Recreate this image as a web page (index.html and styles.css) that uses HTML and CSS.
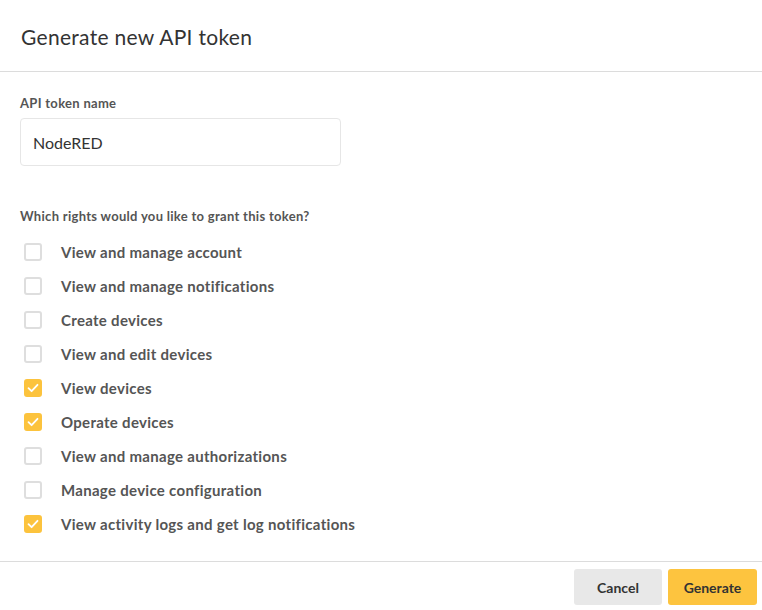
FILE: index.html
```html
<!DOCTYPE html>
<html>
<head>
<meta charset="utf-8">
<link rel="stylesheet" href="styles.css">
</head>
<body>
<div class="modal">
  <header class="modal-header">
    <h1 class="title">Generate new API token</h1>
  </header>
  <section class="modal-body">
    <label class="field-label">API token name</label>
    <div class="input">NodeRED</div>
    <p class="question">Which rights would you like to grant this token?</p>
    <ul class="rights">
      <li class="right"><span class="box"></span><span class="rlabel">View and manage account</span></li>
      <li class="right"><span class="box"></span><span class="rlabel">View and manage notifications</span></li>
      <li class="right"><span class="box"></span><span class="rlabel">Create devices</span></li>
      <li class="right"><span class="box"></span><span class="rlabel">View and edit devices</span></li>
      <li class="right"><span class="box checked"><svg viewBox="0 0 18 18" width="18" height="18"><path d="M4.5 9.2 L7.6 12.2 L13.5 5.8" fill="none" stroke="#fff" stroke-width="1.8" stroke-linecap="round" stroke-linejoin="round"/></svg></span><span class="rlabel">View devices</span></li>
      <li class="right"><span class="box checked"><svg viewBox="0 0 18 18" width="18" height="18"><path d="M4.5 9.2 L7.6 12.2 L13.5 5.8" fill="none" stroke="#fff" stroke-width="1.8" stroke-linecap="round" stroke-linejoin="round"/></svg></span><span class="rlabel">Operate devices</span></li>
      <li class="right"><span class="box"></span><span class="rlabel">View and manage authorizations</span></li>
      <li class="right"><span class="box"></span><span class="rlabel">Manage device configuration</span></li>
      <li class="right"><span class="box checked"><svg viewBox="0 0 18 18" width="18" height="18"><path d="M4.5 9.2 L7.6 12.2 L13.5 5.8" fill="none" stroke="#fff" stroke-width="1.8" stroke-linecap="round" stroke-linejoin="round"/></svg></span><span class="rlabel">View activity logs and get log notifications</span></li>
    </ul>
  </section>
  <footer class="modal-footer">
    <button class="btn btn-cancel">Cancel</button>
    <button class="btn btn-primary">Generate</button>
  </footer>
</div>
</body>
</html>
```

FILE: styles.css
```css
* { box-sizing: border-box; }
html, body { margin: 0; padding: 0; background: #fff; }
body {
  font-family: Lato, "Open Sans", "Liberation Sans", sans-serif;
  color: #555;
}
.modal {
  width: 762px;
  height: 610px;
  display: flex;
  flex-direction: column;
}
.modal-header {
  height: 72px;
  border-bottom: 1px solid #dcdcdc;
  padding: 2px 21px 0;
  display: flex;
  align-items: center;
}
.title {
  margin: 0;
  font-size: 21px;
  font-weight: 400;
  color: #333;
  letter-spacing: 0.3px;
}
.modal-body {
  height: 490px;
  padding: 0 20px;
  border-bottom: 1px solid #dcdcdc;
}
.field-label {
  display: block;
  margin-top: 23px;
  font-size: 13px;
  font-weight: 700;
  line-height: 16px;
  letter-spacing: 0.3px;
  color: #555;
}
.input {
  margin-top: 7px;
  width: 321px;
  height: 48px;
  border: 1px solid #e6e6e6;
  border-radius: 4px;
  padding: 0 12px;
  display: flex;
  align-items: center;
  font-size: 16px;
  color: #333;
}
.question {
  margin: 42px 0 0;
  font-size: 13px;
  font-weight: 700;
  line-height: 16px;
  letter-spacing: 0.3px;
  color: #555;
}
.rights {
  list-style: none;
  margin: 11px 0 0;
  padding: 0;
}
.right {
  height: 34px;
  display: flex;
  align-items: center;
}
.box {
  width: 18px;
  height: 18px;
  margin-left: 4px;
  border: 2px solid #dedede;
  border-radius: 3px;
  display: flex;
  align-items: center;
  justify-content: center;
  flex-shrink: 0;
}
.box.checked {
  background: #fcc33d;
  border-color: #fcc33d;
}
.box svg { display: block; flex-shrink: 0; }
.rlabel {
  margin-left: 19px;
  font-size: 15px;
  font-weight: 700;
  letter-spacing: 0.3px;
  color: #555;
}
.modal-footer {
  flex: 1;
  display: flex;
  justify-content: flex-end;
  align-items: flex-start;
  padding: 7px 5px 0 0;
  gap: 6px;
}
.btn {
  height: 36px;
  border: none;
  border-radius: 3px;
  font-family: Lato, "Open Sans", "Liberation Sans", sans-serif;
  font-size: 14px;
  font-weight: 700;
  color: #333;
  cursor: pointer;
}
.btn-cancel {
  width: 88px;
  background: #e8e8e8;
}
.btn-primary {
  width: 89px;
  background: #fdc43f;
}
```
